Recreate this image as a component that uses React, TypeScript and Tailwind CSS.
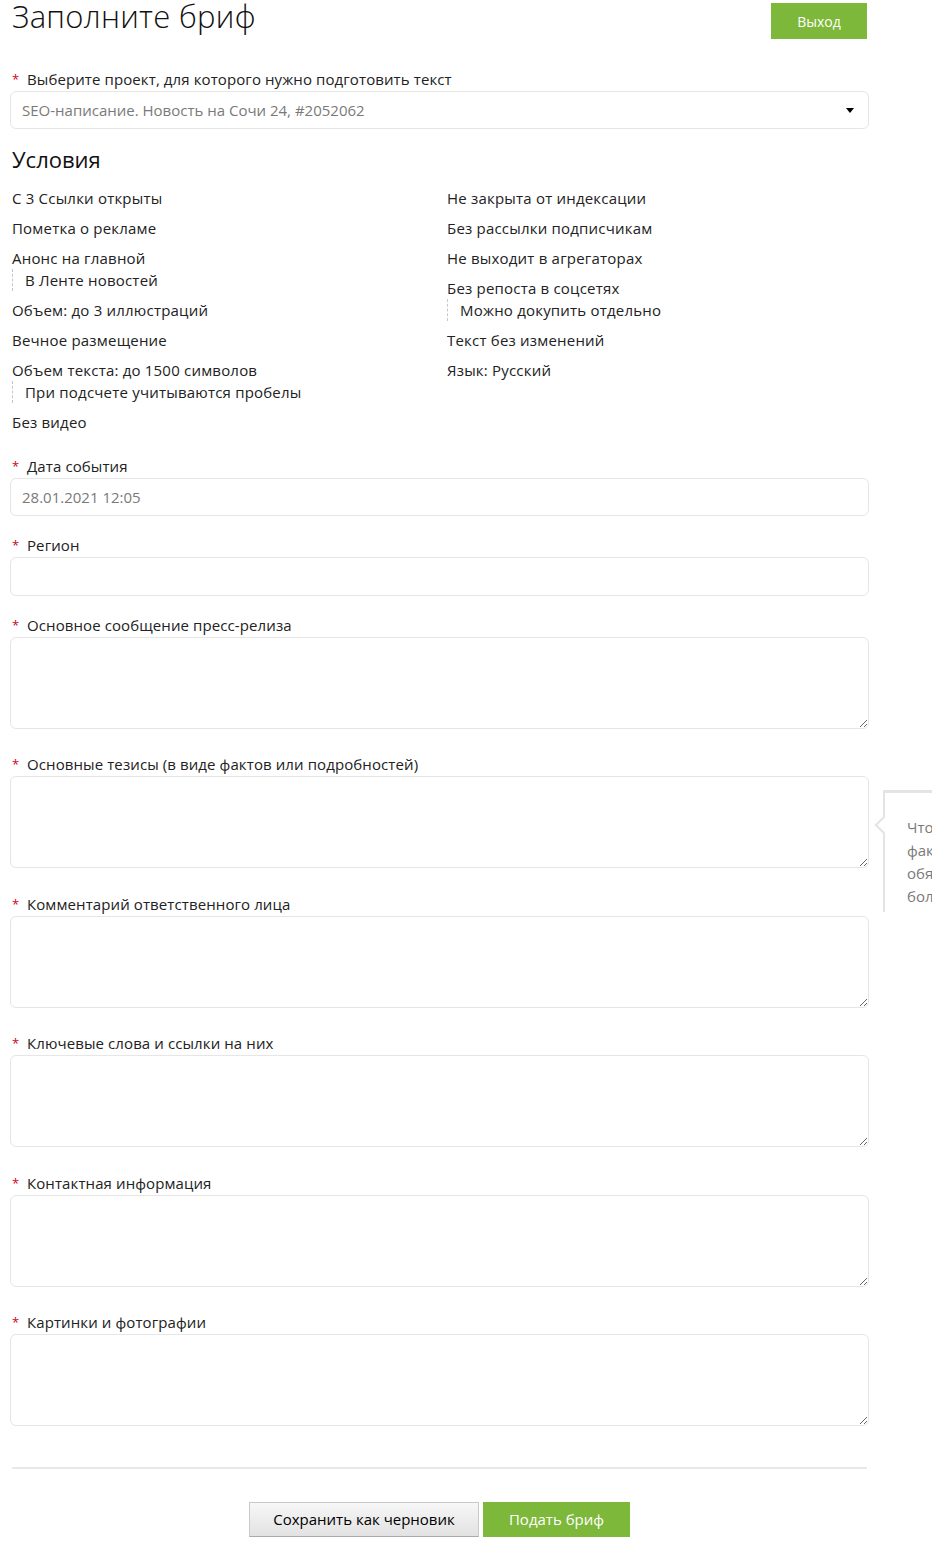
import React from 'react';

interface Condition {
  text: string;
  note?: string;
}

const conditionsLeft: Condition[] = [
  { text: 'С 3 Ссылки открыты' },
  { text: 'Пометка о рекламе' },
  { text: 'Анонс на главной', note: 'В Ленте новостей' },
  { text: 'Объем: до 3 иллюстраций' },
  { text: 'Вечное размещение' },
  { text: 'Объем текста: до 1500 символов', note: 'При подсчете учитываются пробелы' },
  { text: 'Без видео' },
];

const conditionsRight: Condition[] = [
  { text: 'Не закрыта от индексации' },
  { text: 'Без рассылки подписчикам' },
  { text: 'Не выходит в агрегаторах' },
  { text: 'Без репоста в соцсетях', note: 'Можно докупить отдельно' },
  { text: 'Текст без изменений' },
  { text: 'Язык: Русский' },
];

const textFields = [
  'Основное сообщение пресс-релиза',
  'Основные тезисы (в виде фактов или подробностей)',
  'Комментарий ответственного лица',
  'Ключевые слова и ссылки на них',
  'Контактная информация',
  'Картинки и фотографии',
];

function Label({ children }: { children: React.ReactNode }) {
  return (
    <div className="flex h-[20px] items-center text-[15px] leading-[20px] tracking-[0.1px] mb-[2px]">
      <span className="w-[15px] text-[13px] text-[#d0021b]">*</span>
      <span>{children}</span>
    </div>
  );
}

function ConditionList({ items }: { items: Condition[] }) {
  return (
    <div className="flex flex-col">
      {items.map((item) => (
        <div key={item.text} className="mb-[8px]">
          <div>{item.text}</div>
          {item.note && (
            <div className="border-l border-dashed border-[#c8c8c8] pl-[12px]">
              {item.note}
            </div>
          )}
        </div>
      ))}
    </div>
  );
}

function Hint() {
  // tooltip next to the "тезисы" field, runs past the window edge
  return (
    <div className="absolute left-[871px] top-[36px] h-[122px] w-[260px] border-l-2 border-t-[3px] border-[#e4e4e4] bg-white pl-[22px] pt-[23px] text-[15px] leading-[23px] text-[#7a7a7a]">
      <div className="absolute left-[-8px] top-[26px] h-[12px] w-[12px] rotate-45 border-b-2 border-l-2 border-[#e4e4e4] bg-white" />
      <div>Чтобы текст был полезным,</div>
      <div>факты, цифры и детали</div>
      <div>обязательно укажите,</div>
      <div>больше подробностей</div>
    </div>
  );
}

export default function App() {
  return (
    <div className="relative min-h-[1565px] w-full overflow-hidden bg-white font-['Open_Sans',sans-serif] text-[#222]">
      <div className="ml-[12px] w-[855px]">
        {/* Header */}
        <div className="flex h-[39px] items-start justify-between pt-[1px]">
          <h1 className="text-[31px] font-light leading-[30px] tracking-[0.3px] text-[#111]">
            Заполните бриф
          </h1>
          <button className="mt-[2px] h-[36px] w-[96px] bg-[#7db83a] text-[14px] text-white">
            Выход
          </button>
        </div>

        {/* Project */}
        <div className="mt-[30px]">
          <Label>Выберите проект, для которого нужно подготовить текст</Label>
          <div className="-mx-[2px] flex h-[38px] items-center justify-between rounded-[6px] border border-[#e6e6e6] pl-[11px] pr-[14px] text-[15px] text-[#7a7a7a]">
            <span>SEO-написание. Новость на Сочи 24, #2052062</span>
            <span className="h-0 w-0 border-x-[4px] border-t-[5px] border-x-transparent border-t-black" />
          </div>
        </div>

        {/* Conditions */}
        <h2 className="mt-[15px] text-[22px] leading-[30px] text-[#111]">Условия</h2>
        <div className="mt-[13px] grid grid-cols-[435px_1fr] text-[15px] leading-[22px] tracking-[0.2px]">
          <ConditionList items={conditionsLeft} />
          <ConditionList items={conditionsRight} />
        </div>

        {/* Date & region */}
        <div className="mt-[15px] mb-[19px]">
          <Label>Дата события</Label>
          <div className="-mx-[2px] flex h-[38px] items-center rounded-[6px] border border-[#e6e6e6] pl-[11px] text-[15px] text-[#7a7a7a]">
            28.01.2021 12:05
          </div>
        </div>
        <div className="mb-[19px]">
          <Label>Регион</Label>
          <input className="-mx-[2px] block h-[39px] w-[859px] rounded-[6px] border border-[#e6e6e6] outline-none" />
        </div>

        {textFields.map((label, i) => (
          <div key={label} className="relative mb-[25.4px]">
            <Label>{label}</Label>
            <textarea className="-mx-[2px] block h-[92px] w-[859px] rounded-[6px] border border-[#e6e6e6] outline-none" />
            {i === 1 && <Hint />}
          </div>
        ))}

        <div className="mt-[41px] h-[2px] bg-[#e8e8e8]" />

        {/* Actions */}
        <div className="mt-[33px] flex justify-center gap-[4px]">
          <button className="h-[35px] w-[230px] border border-[#c9c9c9] border-b-[#a9a9a9] bg-gradient-to-b from-[#f7f7f7] to-[#e2e2e2] text-[15px] text-black">
            Сохранить как черновик
          </button>
          <button className="h-[35px] w-[147px] bg-[#7db83a] text-[15px] text-white">
            Подать бриф
          </button>
        </div>
      </div>
    </div>
  );
}
